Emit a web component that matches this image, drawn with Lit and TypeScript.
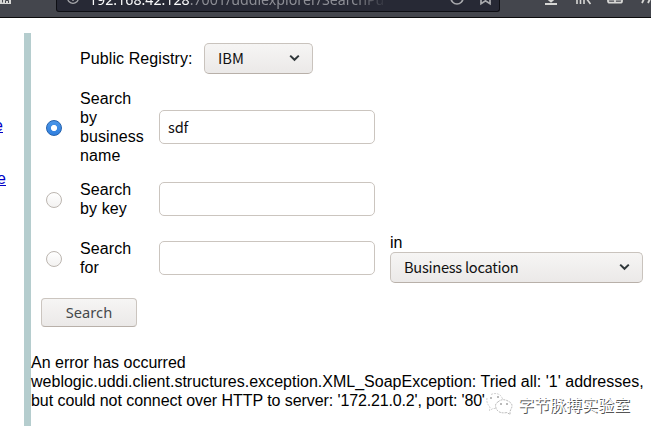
import { LitElement, html, css, svg } from "lit";
import { customElement, property } from "lit/decorators.js";

@customElement("gtk-select")
class GtkSelect extends LitElement {
  @property() label = "";
  static styles = css`
    :host {
      display: flex;
      box-sizing: border-box;
      height: 31px;
      align-items: center;
      justify-content: space-between;
      padding: 0 12px 0 13px;
      border: 1px solid #c9c3bd;
      border-bottom-color: #b8b0a9;
      border-radius: 5px;
      background: linear-gradient(#f6f5f4, #ebe9e8);
      font: 14.67px/20px "Noto Sans CJK SC", sans-serif;
      color: #111;
      white-space: nowrap;
    }
    span { padding-bottom: 1px; letter-spacing: var(--tracking, 0); }
    svg { display: block; margin-top: -1px; }
  `;
  render() {
    return html`<span>${this.label}</span>
      <svg width="11" height="8" viewBox="0 0 11 8">
        <path d="M1.2 1.6 5.5 5.8 9.8 1.6" fill="none" stroke="#30373a" stroke-width="2" />
      </svg>`;
  }
}

@customElement("browser-bar")
class BrowserBar extends LitElement {
  static styles = css`
    :host {
      display: flex;
      box-sizing: border-box;
      height: 18px;
      overflow: hidden;
      background: #44464d;
      border-bottom: 1px solid #0c0c0d;
      align-items: flex-start;
    }
    .home { width: 56px; flex: none; }
    .url {
      box-sizing: border-box;
      display: flex;
      width: 444px;
      height: 12px;
      flex: none;
      border: 1px solid #0e0f14;
      border-top: 0;
      border-radius: 0 0 3px 3px;
      background: #272935;
      align-items: flex-end;
    }
    .info { width: 32px; height: 11px; flex: none; }
    .address {
      width: 299px;
      height: 11px;
      display: flex;
      align-items: flex-end;
      white-space: pre;
      font: 14.2px/20px "Noto Sans", sans-serif;
      color: #8d8e95;
      -webkit-mask-image: linear-gradient(90deg, #000 265px, transparent 299px);
    }
    .address span { margin-bottom: 1px; }
    .address .host { color: #f9f9fa; margin: 0; }
    svg { display: block; flex: none; }
  `;
  render() {
    return html`
      <svg class="home" width="56" height="17" viewBox="0 0 56 17">
        <path d="M0 0h11v4H0z" fill="#d7d7d5" />
        <path d="M2.500 0v2.500M5.500 3V.5h3V3" fill="none" stroke="#44464d" />
      </svg>
      <div class="url">
        <svg class="info" width="32" height="11" viewBox="0 0 32 11">
          <circle cx="16" cy="-2" r="5.4" fill="none" stroke="#a5a6aa" stroke-width="1.3" />
          <path d="M16-4v5" stroke="#a5a6aa" stroke-width="1.4" />
        </svg>
        <div class="address"><span><span class="host">192.168.42.128</span>:7001/uddiexplorer/SearchPu</span></div>
        <svg width="110" height="11" viewBox="387 0 110 11">
          <path d="M450-2A6 6 0 0 0 462-2" fill="none" stroke="#a8a9ad" stroke-width="1.7" />
          <path d="M480-1v4.700l4.500-2.900L489 3.700v-4.700" fill="none" stroke="#a8a9ad" stroke-width="1.7" />
        </svg>
      </div>
      <svg width="151" height="17" viewBox="500 0 151 17">
        <g fill="none" stroke="#d7d7d5" stroke-width="1.8">
          <path d="M545 4h12M551-2v3M548-1l3 2.500L554-1" />
          <path d="M577-2v6M580.500-2v6M584-2v6M586-2l4.500 6" stroke-width="1.6" />
          <path d="M608-2v3q0 1.700 1.700 1.700h10.600q1.700 0 1.700-1.700V-2M615-2v5M608-.3h14" />
          <path d="M645-3l-3 6M651-3l-3 6" />
        </g>
      </svg>`;
  }
}

@customElement("app-root")
class AppRoot extends LitElement {
  static styles = css`
    :host {
      display: flex;
      flex-direction: column;
      position: relative;
      width: 651px;
      height: 433px;
      overflow: hidden;
      background: #fff;
      color: #000;
      font: 16px/19px "Liberation Sans", Arial, sans-serif;
    }
    .page { display: flex; height: 393px; margin-top: 15px; }
    .links {
      box-sizing: border-box;
      width: 24px;
      flex: none;
      padding-top: 83px;
    }
    .links a {
      display: flex;
      justify-content: flex-end;
      width: 6px;
      margin-bottom: 34px;
      color: #0000c8;
      text-decoration: underline;
      white-space: nowrap;
    }
    .links a.first { width: 3px; }
    .divider { width: 7px; flex: none; background: #b5cdce; }
    .main { flex: 1; min-width: 0; padding-top: 10px; }
    .form { display: flex; flex-direction: column; gap: 15px; align-items: flex-start; }
    .row {
      display: grid;
      grid-template-columns: 34px 79px 216px 253px;
      align-items: center;
      margin-left: 15px;
    }
    .registry { display: flex; align-items: center; margin-left: 49px; }
    .registry span { width: 124px; letter-spacing: 0.09px; }
    .registry gtk-select { width: 109px; }
    .name { width: 66px; letter-spacing: 0.1px; }
    .radio {
      box-sizing: border-box;
      width: 16px;
      height: 16px;
      margin-top: 2px;
      border: 1px solid #bcb6b0;
      border-radius: 50%;
      background: linear-gradient(#fff, #f3f2f1);
    }
    .radio.on {
      border-color: #2461ad;
      background: radial-gradient(circle, #fff 2.7px, transparent 3.5px), linear-gradient(#4b96e8, #3080df);
    }
    .field {
      box-sizing: border-box;
      height: 34px;
      padding: 0 8px;
      border: 1px solid #cbc5bf;
      border-radius: 5px;
      background: #fff;
      font: 14.67px/31px "Noto Sans CJK SC", sans-serif;
      letter-spacing: -0.2px;
      color: #111;
    }
    .place { margin-left: 15px; width: 253px; --tracking: -0.28px; }
    .button {
      box-sizing: border-box;
      width: 96px;
      height: 29px;
      margin-left: 10px;
      border: 1px solid #cbc5bf;
      border-bottom-color: #b8b0a9;
      border-radius: 4px;
      background: linear-gradient(#f6f5f4, #ebe9e8);
      font: 14.67px/27px "Noto Sans", sans-serif;
      color: #45494b;
      text-align: center;
    }
    .error { margin-top: 26px; white-space: nowrap; }
    .long { letter-spacing: 0.01px; }
    .last { letter-spacing: -0.06px; }
    .tail { letter-spacing: -0.16px; }
    .mark {
      position: absolute;
      left: 486px;
      top: 391px;
      display: flex;
      align-items: center;
      gap: 5px;
      color: #fff;
      font: 16px/26px "Noto Sans CJK SC", sans-serif;
      text-shadow: 1px 1px 0 #555;
    }
  `;
  private row(label: unknown, value: string, on = false, extra: unknown = "") {
    return html`<div class="row">
      <div class="radio ${on ? "on" : ""}"></div>
      <div class="name">${label}</div>
      <div class="field">${value}</div>
      ${extra}
    </div>`;
  }
  render() {
    const bubbles = svg`
      <g fill="none" stroke="#999" stroke-width=".7" stroke-dasharray="2 1">
        <path d="M1 6Q0 11 4 15L3.500 18.500 7 16.500h3M5 2.500Q11 0 15 4L17 7.500" stroke="#bbb" />
        <path d="M12 10Q16 6 22 9T25 17L24 19.500V22.500L21 20.500Q13 22 10.500 17T12 10" fill="#fff" />
      </g>
      <path d="M4 6h2M11 5h2M14 12h2M20 12h2" stroke="#777" />`;
    return html`
      <browser-bar></browser-bar>
      <div class="page">
        <div class="links"><a class="first">e</a><a>e</a></div>
        <div class="divider"></div>
        <div class="main">
          <div class="form">
            <div class="registry"><span>Public Registry:</span><gtk-select label="IBM"></gtk-select></div>
            ${this.row(html`Search<br />by<br />business<br />name`, "sdf", true)}
            ${this.row(html`Search<br />by key`, "")}
            ${this.row(html`Search<br />for`, "", false, html`<div class="place">in<gtk-select label="Business location"></gtk-select></div>`)}
            <div class="button">Search</div>
          </div>
          <div class="error">
            An error has occurred<br />
            <span class="long">weblogic.uddi.client.structures.exception.XML_SoapException: Tried all: '1' addresses,</span><br />
            <span class="last">but could not connect over HTTP to server: <span class="tail">'172.21.0.2', port: '80'</span></span>
          </div>
        </div>
      </div>
      <div class="mark"><svg width="27" height="24" viewBox="0 0 27 24">${bubbles}</svg><span>字节脉搏实验室</span></div>`;
  }
}
